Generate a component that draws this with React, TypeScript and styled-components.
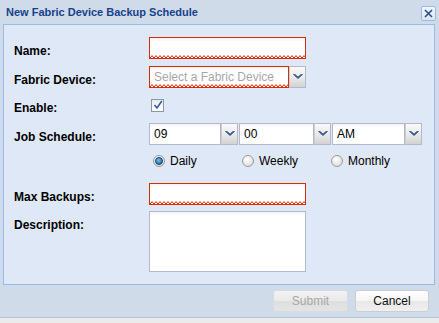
import React from 'react';
import styled, { createGlobalStyle } from 'styled-components';

const GlobalStyle = createGlobalStyle`
  html, body {
    margin: 0;
    padding: 0;
    background: #ebebeb;
  }
  * {
    box-sizing: border-box;
  }
`;

const Window = styled.div`
  width: 439px;
  height: 318px;
  background: #cfdbe9;
  border-bottom: 1px solid #b3c4d8;
  display: flex;
  flex-direction: column;
  font-family: 'Liberation Sans', Arial, sans-serif;
`;

const TitleBar = styled.div`
  height: 24px;
  display: flex;
  align-items: center;
  justify-content: space-between;
  padding: 0 3px 0 6px;
`;

const Title = styled.div`
  font-size: 11px;
  font-weight: bold;
  color: #15428b;
`;

const CloseButton = styled.div`
  width: 15px;
  height: 15px;
  margin-top: 2px;
  border: 1px solid #99bbe8;
  border-radius: 2px;
  background: linear-gradient(#f1f6fc, #dbe6f4);
  display: flex;
  align-items: center;
  justify-content: center;
`;

const Panel = styled.div`
  margin-left: 3px;
  width: 432px;
  height: 261px;
  background: #dfe8f6;
  border: 1px solid #99bbe8;
  padding: 12px 0 0 10px;
  display: flex;
  flex-direction: column;
`;

const Row = styled.div<{ $top: number; $height?: number }>`
  display: flex;
  margin-top: ${(p) => p.$top}px;
  height: ${(p) => p.$height ?? 22}px;
`;

const Label = styled.div`
  width: 135px;
  flex-shrink: 0;
  padding-top: 6px;
  font-size: 12px;
  line-height: 16px;
  font-weight: bold;
  color: #000;
`;

const Field = styled.div`
  display: flex;
  align-items: center;
`;

const TextBox = styled.div<{ $width: number; $invalid?: boolean; $height?: number }>`
  position: relative;
  width: ${(p) => p.$width}px;
  height: ${(p) => p.$height ?? 22}px;
  border: 1px solid ${(p) => (p.$invalid ? '#cc3300' : '#b5b8c8')};
  background: linear-gradient(#f3f3f3, #ffffff 4px, #ffffff);
  padding: 3px 4px 0;
  font-size: 12px;
  line-height: 15px;
  color: #000;
  white-space: nowrap;
  overflow: hidden;
`;

const InvalidLine = styled.svg`
  position: absolute;
  left: 0;
  bottom: 0;
  width: 100%;
  height: 3px;
  display: block;
`;

const Placeholder = styled.span`
  color: #a8a8a8;
`;

const Trigger = styled.div`
  width: 17px;
  height: 22px;
  flex-shrink: 0;
  border: 1px solid #b5b8c8;
  border-left: 1px solid #c8ccd6;
  background: linear-gradient(#fafafa, #e6e6e6 60%, #d2d2d2);
  display: flex;
  align-items: center;
  justify-content: center;
`;

const Combo = styled.div<{ $gap?: number }>`
  display: flex;
  margin-left: ${(p) => p.$gap ?? 0}px;
`;

const CheckBox = styled.div`
  width: 13px;
  height: 13px;
  margin-left: 2px;
  border: 1px solid #8e97a6;
  background: linear-gradient(#e7ecf2, #ffffff);
  display: flex;
  align-items: center;
  justify-content: center;
`;

const RadioGroup = styled.div`
  display: flex;
  align-items: center;
`;

const RadioItem = styled.div`
  width: 89px;
  display: flex;
  align-items: center;
  padding-left: 4px;
  font-size: 12px;
  color: #000;
`;

const RadioCircle = styled.div<{ $checked?: boolean }>`
  width: 12px;
  height: 12px;
  border-radius: 50%;
  border: 1px solid #9a9a9a;
  background: radial-gradient(circle at 40% 35%, #ffffff, #d4d4d4);
  margin-right: 5px;
  display: flex;
  align-items: center;
  justify-content: center;

  &::after {
    content: '';
    display: ${(p) => (p.$checked ? 'block' : 'none')};
    width: 6px;
    height: 6px;
    border-radius: 50%;
    background: radial-gradient(circle at 40% 35%, #6fc0f0, #1b5c9c);
    border: 1px solid #0d3a6b;
  }
`;

const Footer = styled.div`
  flex: 1;
  display: flex;
  justify-content: flex-end;
  align-items: flex-start;
  gap: 7px;
  padding: 5px 10px 0 0;
`;

const Button = styled.div<{ $width: number; $disabled?: boolean }>`
  width: ${(p) => p.$width}px;
  height: 22px;
  border: 1px solid ${(p) => (p.$disabled ? '#d6dce4' : '#c9ced6')};
  border-radius: 3px;
  background: ${(p) =>
    p.$disabled
      ? 'linear-gradient(#f2f2f2, #eaeaea 50%, #dedede 51%, #e4e4e4)'
      : 'linear-gradient(#ffffff, #f6f6f6 50%, #e8e8e8 51%, #efefef)'};
  color: ${(p) => (p.$disabled ? '#a8a8a8' : '#111')};
  font-size: 12px;
  display: flex;
  align-items: center;
  justify-content: center;
`;

const Chevron = () => (
  <svg width="10" height="6" viewBox="0 0 10 6">
    <path d="M0.5 0.5 L5 4.5 L9.5 0.5 L8 0.5 L5 3 L2 0.5 Z" fill="#35578e" stroke="#35578e" strokeWidth="0.8" strokeLinejoin="round" />
  </svg>
);

// red zigzag underline that marks a required field
const Zigzag = () => (
  <InvalidLine preserveAspectRatio="none">
    <defs>
      <pattern id="zz" width="4" height="3" patternUnits="userSpaceOnUse">
        <polyline points="0,3 2,0.6 4,3" fill="none" stroke="#e02000" strokeWidth="1" />
      </pattern>
    </defs>
    <rect x="0" y="0" width="100%" height="3" fill="url(#zz)" />
  </InvalidLine>
);

const Input = ({ width, height, invalid, children }: {
  width: number;
  height?: number;
  invalid?: boolean;
  children?: React.ReactNode;
}) => (
  <TextBox $width={width} $height={height} $invalid={invalid}>
    {children}
    {invalid && <Zigzag />}
  </TextBox>
);

const Select = ({ width, value, placeholder, invalid, gap }: {
  width: number;
  value?: string;
  placeholder?: string;
  invalid?: boolean;
  gap?: number;
}) => (
  <Combo $gap={gap}>
    <Input width={width - 17} invalid={invalid}>
      {value ?? <Placeholder>{placeholder}</Placeholder>}
    </Input>
    <Trigger>
      <Chevron />
    </Trigger>
  </Combo>
);

const App: React.FC = () => {
  return (
    <>
      <GlobalStyle />
      <Window>
        <TitleBar>
          <Title>New Fabric Device Backup Schedule</Title>
          <CloseButton>
            <svg width="9" height="9" viewBox="0 0 9 9">
              <path d="M1 1 L8 8 M8 1 L1 8" stroke="#2e4f88" strokeWidth="1.6" />
            </svg>
          </CloseButton>
        </TitleBar>
        <Panel>
          <Row $top={0}>
            <Label>Name:</Label>
            <Input width={157} invalid />
          </Row>
          <Row $top={7}>
            <Label>Fabric Device:</Label>
            <Select width={157} placeholder="Select a Fabric Device" invalid />
          </Row>
          <Row $top={6}>
            <Label>Enable:</Label>
            <Field>
              <CheckBox>
                <svg width="10" height="10" viewBox="0 0 10 10">
                  <path d="M1.5 5 L4 8 L8.8 1" stroke="#3a5a9a" strokeWidth="1.6" fill="none" />
                </svg>
              </CheckBox>
            </Field>
          </Row>
          <Row $top={7}>
            <Label>Job Schedule:</Label>
            <Select width={89} value="09" />
            <Select width={92} value="00" gap={1} />
            <Select width={90} value="AM" gap={1} />
          </Row>
          <Row $top={7} $height={18}>
            <Label />
            <RadioGroup>
              <RadioItem>
                <RadioCircle $checked />
                Daily
              </RadioItem>
              <RadioItem>
                <RadioCircle />
                Weekly
              </RadioItem>
              <RadioItem>
                <RadioCircle />
                Monthly
              </RadioItem>
            </RadioGroup>
          </Row>
          <Row $top={13}>
            <Label>Max Backups:</Label>
            <Input width={157} invalid />
          </Row>
          <Row $top={6} $height={61}>
            <Label>Description:</Label>
            <Input width={157} height={61} />
          </Row>
        </Panel>
        <Footer>
          <Button $width={75} $disabled>Submit</Button>
          <Button $width={74}>Cancel</Button>
        </Footer>
      </Window>
    </>
  );
};

export default App;
